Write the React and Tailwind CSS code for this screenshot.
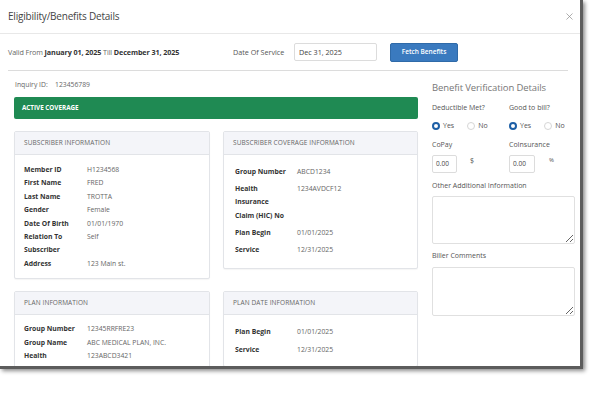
import { X } from 'lucide-react';

const SUBSCRIBER = [
  ['Member ID', 'H1234568'],
  ['First Name', 'FRED'],
  ['Last Name', 'TROTTA'],
  ['Gender', 'Female'],
  ['Date Of Birth', '01/01/1970'],
  [<>Relation To<br />Subscriber</>, 'Self'],
  ['Address', '123 Main st.'],
];

const COVERAGE = [
  ['Group Number', 'ABCD1234'],
  [<>Health<br />Insurance<br />Claim (HIC) No</>, '1234AVDCF12'],
  ['Plan Begin', '01/01/2025'],
  ['Service', '12/31/2025'],
];

const PLAN = [
  ['Group Number', '12345RRFRE23'],
  ['Group Name', 'ABC MEDICAL PLAN, INC.'],
  [<>Health<br />Insurance</>, '123ABCD3421'],
];

const PLAN_DATES = [
  ['Plan Begin', '01/01/2025'],
  ['Service', '12/31/2025'],
];

function Card({ title, children }) {
  return (
    <div className="border border-[#e2e4e8] rounded-[2px] bg-white shadow-[0_1px_1px_rgba(0,0,0,0.04)]">
      <div className="h-[23px] flex items-center px-[9px] bg-[#f4f5f9] border-b border-[#e2e4e8] text-[6.5px] text-[#666] uppercase tracking-[0.1px]">
        {title}
      </div>
      {children}
    </div>
  );
}

function Row({ label, value, labelW = 'w-[63px]' }) {
  return (
    <div className="flex leading-[13.4px]">
      <div className={`${labelW} shrink-0 font-bold text-[#333]`}>{label}</div>
      <div className="text-[#666]">{value}</div>
    </div>
  );
}

function Radio({ checked, label }) {
  return (
    <div className="flex items-center gap-[3px]">
      {checked ? (
        <span className="w-[8px] h-[8px] rounded-full border-[2.5px] border-[#1d5fa6] bg-white" />
      ) : (
        <span className="w-[8px] h-[8px] rounded-full border border-[#d6d6d6] bg-white" />
      )}
      <span className="text-[#555]">{label}</span>
    </div>
  );
}

export default function App() {
  return (
    <div className="w-[595px] h-[420px] bg-white overflow-hidden" style={{ fontFamily: '"Open Sans", "Noto Sans", sans-serif' }}>
      <div className="w-[583px] h-[369px] bg-white border-r-[3px] border-b-[3px] border-[#5c5c5c] shadow-[2px_2px_4px_rgba(0,0,0,0.45)] overflow-hidden flex flex-col">
        {/* Header */}
        <div className="h-[34px] shrink-0 flex items-center justify-between pl-[8px] pr-[5px] border-b border-[#e8e8e8]">
          <h1 className="text-[10px] text-[#444] tracking-[-0.2px]">Eligibility/Benefits Details</h1>
          <X size={11} strokeWidth={1.5} className="text-[#8a8a8a]" />
        </div>

        {/* Valid row */}
        <div className="h-[37px] shrink-0 ml-[8px] mr-[12px] border-b border-[#dcdcdc] flex items-center text-[7.2px] text-[#444]">
          <div className="w-[225px] tracking-[-0.1px]">
            <span className="text-[#666]">Valid From </span>
            <span className="font-bold text-[#333]">January 01, 2025</span>
            <span className="text-[#666]"> Till </span>
            <span className="font-bold text-[#333]">December 31, 2025</span>
          </div>
          <div className="w-[61px] text-[#555]">Date Of Service</div>
          <div className="w-[83px] h-[18px] border border-[#dcdcdc] rounded-[2px] flex items-center px-[4px] text-[#444]">Dec 31, 2025</div>
          <button className="ml-[13px] w-[68px] h-[19px] rounded-[2px] bg-[#3a7abf] border border-[#2f6aa8] text-white text-[6.5px] font-semibold">
            Fetch Benefits
          </button>
        </div>

        {/* Body */}
        <div className="flex pl-[14px] pt-[8px]">
          <div className="w-[404px] shrink-0 text-[6.8px]">
            <div className="h-[12px] flex items-center pl-[1px] text-[#666]">
              <span className="w-[40px]">Inquiry ID:</span>
              <span>123456789</span>
            </div>
            <div className="mt-[6px] h-[22px] rounded-[2px] bg-[#1f8a53] flex items-center pl-[8px] text-white font-bold text-[6.3px]">
              ACTIVE COVERAGE
            </div>

            <div className="mt-[12px] grid grid-cols-[196px_195px] gap-x-[13px] gap-y-[12px] items-start">
              <Card title="Subscriber Information">
                <div className="pl-[9px] pt-[8px] pb-[8px]">
                  {SUBSCRIBER.map(([l, v], i) => (
                    <Row key={i} label={l} value={v} />
                  ))}
                </div>
              </Card>
              <Card title="Subscriber Coverage Information">
                <div className="pl-[11px] pt-[10px] pb-[12px] flex flex-col gap-[3.6px]">
                  {COVERAGE.map(([l, v], i) => (
                    <Row key={i} label={l} value={v} labelW="w-[62px]" />
                  ))}
                </div>
              </Card>
              <Card title="Plan Information">
                <div className="pl-[9px] pt-[7px] pb-[9px]">
                  {PLAN.map(([l, v], i) => (
                    <Row key={i} label={l} value={v} />
                  ))}
                </div>
              </Card>
              <Card title="Plan Date Information">
                <div className="pl-[11px] pt-[10px] pb-[9px] flex flex-col gap-[4.6px]">
                  {PLAN_DATES.map(([l, v], i) => (
                    <Row key={i} label={l} value={v} labelW="w-[62px]" />
                  ))}
                </div>
              </Card>
            </div>
          </div>

          {/* Right panel */}
          <div className="ml-[14px] w-[143px] shrink-0 text-[7px] text-[#555]">
            <div className="pt-[2px] text-[9.5px] text-[#777] tracking-[-0.1px]">Benefit Verification Details</div>
            <div className="mt-[8px] grid grid-cols-[77px_66px]">
              <div>Deductible Met?</div>
              <div>Good to bill?</div>
            </div>
            <div className="mt-[7px] grid grid-cols-[77px_66px]">
              <div className="flex gap-[13px]">
                <Radio checked label="Yes" />
                <Radio label="No" />
              </div>
              <div className="flex gap-[13px]">
                <Radio checked label="Yes" />
                <Radio label="No" />
              </div>
            </div>
            <div className="mt-[9px] grid grid-cols-[77px_66px]">
              <div>CoPay</div>
              <div>CoInsurance</div>
            </div>
            <div className="mt-[4px] grid grid-cols-[77px_66px]">
              <div className="flex items-start">
                <div className="w-[25px] h-[18px] border border-[#dcdcdc] rounded-[2px] flex items-center pl-[3px] text-[6.5px] text-[#444]">0.00</div>
                <span className="ml-[13px] mt-[1px]">$</span>
              </div>
              <div className="flex items-start">
                <div className="w-[26px] h-[18px] border border-[#dcdcdc] rounded-[2px] flex items-center pl-[3px] text-[6.5px] text-[#444]">0.00</div>
                <span className="ml-[14px] mt-[1px] text-[6px]">%</span>
              </div>
            </div>
            <div className="mt-[8px]">Other Additional Information</div>
            <textarea className="mt-[5px] block w-[143px] h-[48px] border border-[#e0e0e0] rounded-[2px] resize-y" />
            <div className="mt-[7px]">Biller Comments</div>
            <textarea className="mt-[5px] block w-[143px] h-[49px] border border-[#e0e0e0] rounded-[2px] resize-y" />
          </div>
        </div>
      </div>
    </div>
  );
}
